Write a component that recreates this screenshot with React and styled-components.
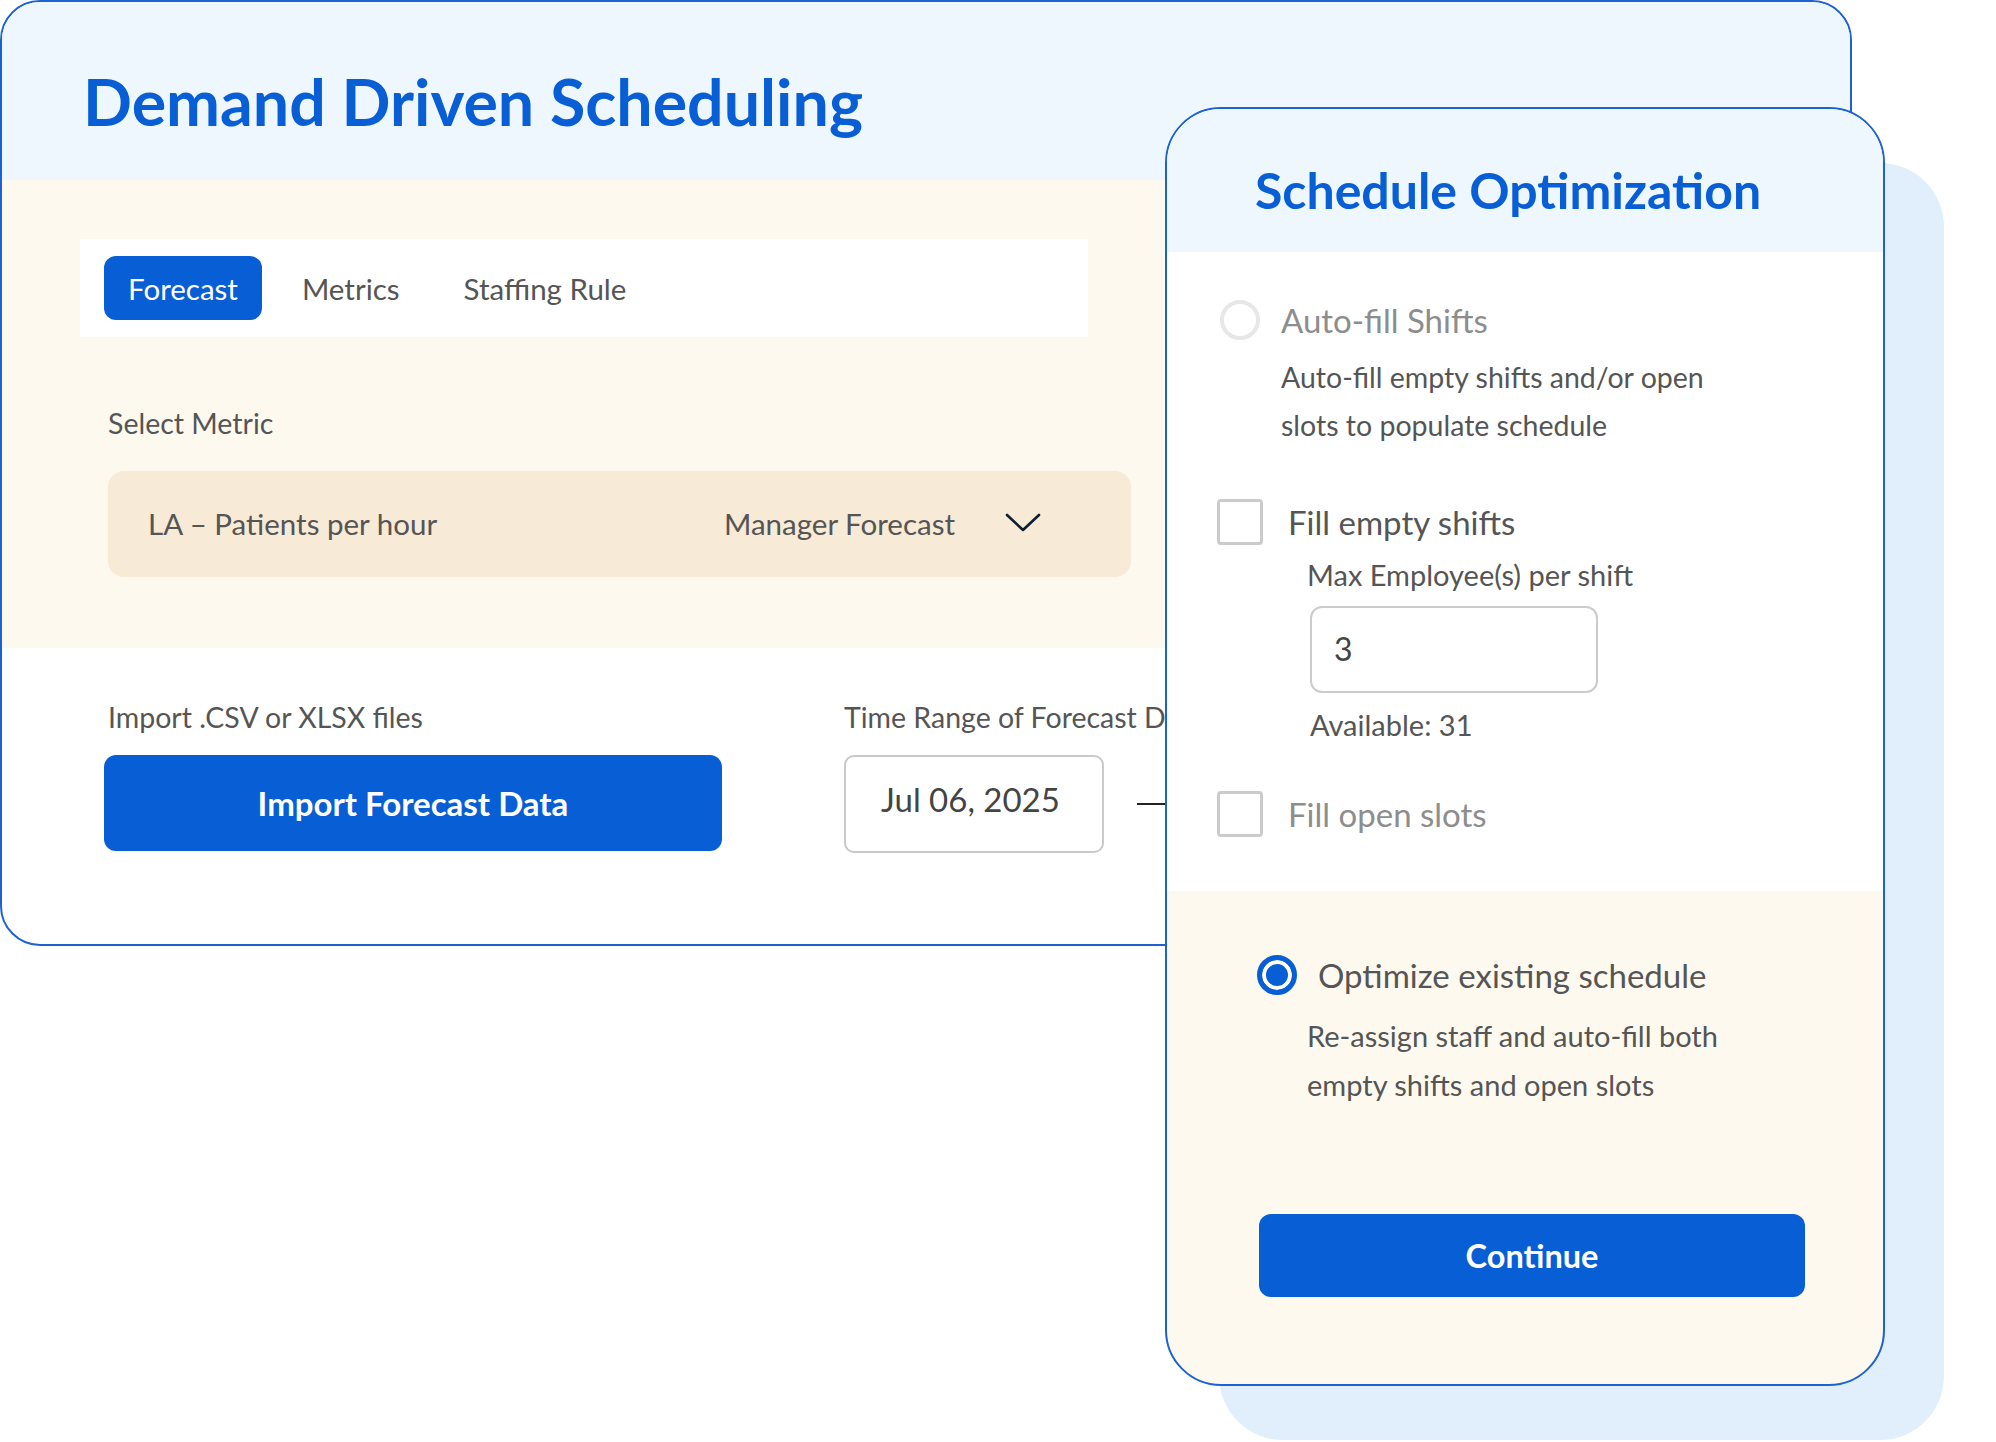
import styled, { createGlobalStyle } from "styled-components"

const GlobalStyle = createGlobalStyle`
  * { box-sizing: border-box; }
  body {
    margin: 0;
    background: #ffffff;
    font-family: Lato, "Open Sans", sans-serif;
    color: #555555;
  }
`;

const BLUE = "#085ed4";
const BORDER_BLUE = "#1c62d0";

const Stage = styled.div`
  position: relative;
  width: 1996px;
  height: 1442px;
  overflow: hidden;
`;

const Card = styled.div`
  position: relative;
  z-index: 1;
  width: 1852px;
  height: 946px;
  border: 2px solid ${BORDER_BLUE};
  border-radius: 40px;
  overflow: hidden;
  background: #ffffff;
  display: flex;
  flex-direction: column;
`;

const Header = styled.div`
  flex: none;
  height: ${p => p.height}px;
  background: #eff7fe;
  display: flex;
  align-items: center;
  padding: ${p => p.top}px 0 0 ${p => p.left}px;
`;

const Title = styled.h1`
  margin: 0;
  font-size: ${p => p.size}px;
  font-weight: 700;
  color: ${BLUE};
  white-space: nowrap;
`;

const CreamSection = styled.div`
  flex: none;
  background: #fdf9ef;
  padding: 59px 0 71px 78px;
`;

const Tabs = styled.div`
  width: 1008px;
  height: 98px;
  background: #ffffff;
  display: flex;
  align-items: center;
  gap: 16px;
  padding-left: 24px;
`;

const Tab = styled.button`
  height: 64px;
  padding: 0 24px;
  border: none;
  border-radius: 12px;
  font-family: inherit;
  font-size: 29.5px;
  background: ${p => (p.active ? BLUE : "transparent")};
  color: ${p => (p.active ? "#ffffff" : "#555555")};
`;

const Field = styled.div`
  margin-left: 28px;
`;

const Label = styled.div`
  font-size: 28.5px;
  line-height: 34px;
  margin-top: ${p => p.mt || 0}px;
  margin-left: ${p => p.ml || 0}px;
  white-space: nowrap;
`;

const Dropdown = styled.div`
  margin-top: 31px;
  width: 1023px;
  height: 106px;
  background: #f7ead6;
  border-radius: 16px;
  display: flex;
  align-items: center;
  padding: 0 90px 2px 40px;
  font-size: 29.5px;
`;

const DropValue = styled.span`
  flex: 1;
`;

const Chevron = styled.svg`
  margin-left: 50px;
`;

const ImportSection = styled.div`
  flex: 1;
  display: flex;
  gap: 122px;
  padding: 52px 0 0 102px;
`;

const Column = styled.div`
  display: flex;
  flex-direction: column;
`;

const PrimaryButton = styled.button`
  margin-top: ${p => p.mt}px;
  margin-left: ${p => p.ml || 0}px;
  width: ${p => p.w}px;
  height: ${p => p.h}px;
  border: none;
  border-radius: 12px;
  background: ${BLUE};
  color: #ffffff;
  font-family: inherit;
  font-weight: 700;
  font-size: ${p => p.size}px;
`;

const DateRow = styled.div`
  margin-top: 21px;
  display: flex;
  align-items: center;
`;

const DateInput = styled.div`
  width: 260px;
  height: 98px;
  border: 2px solid #c9c9c9;
  border-radius: 10px;
  display: flex;
  align-items: center;
  padding: 0 0 10px 35px;
  font-size: 33px;
  color: #444444;
  background: #ffffff;
`;

const Dash = styled.div`
  width: 40px;
  height: 2px;
  margin-left: 33px;
  background: #222222;
`;

const Backdrop = styled.div`
  position: absolute;
  z-index: 0;
  left: 1219px;
  top: 163px;
  width: 725px;
  height: 1277px;
  border-radius: 64px;
  background: #e1effd;
`;

const Modal = styled.div`
  position: absolute;
  z-index: 2;
  left: 1165px;
  top: 107px;
  width: 720px;
  height: 1279px;
  border: 2px solid ${BORDER_BLUE};
  border-radius: 56px;
  overflow: hidden;
  background: #fdf9ef;
  display: flex;
  flex-direction: column;
`;

const OptionsBody = styled.div`
  flex: none;
  background: #ffffff;
  padding: 48px 0 54px 50px;
`;

const CreamBody = styled.div`
  flex: 1;
  padding: 64px 0 0 90px;
`;

const OptionRow = styled.div`
  display: flex;
  align-items: center;
  gap: ${p => p.gap}px;
  margin-top: ${p => p.mt || 0}px;
  padding-left: ${p => p.indent || 0}px;
`;

const Radio = styled.span`
  flex: none;
  width: 40px;
  height: 40px;
  border-radius: 50%;
  border: ${p => (p.checked ? `5px solid ${BLUE}` : "4px solid #e7e7e7")};
  background: ${p => (p.checked ? BLUE : "#ffffff")};
  box-shadow: ${p => (p.checked ? "inset 0 0 0 4px #ffffff" : "none")};
`;

const Checkbox = styled.span`
  flex: none;
  width: 46px;
  height: 46px;
  border: 3px solid #cbcbcb;
  border-radius: 4px;
  background: #ffffff;
`;

const OptionLabel = styled.span`
  font-size: 33px;
  line-height: 40px;
  color: ${p => (p.muted ? "#8d8d8d" : "#555555")};
`;

const Desc = styled.p`
  margin: ${p => p.mt}px 0 0 ${p => p.ml}px;
  font-size: ${p => p.size}px;
  line-height: ${p => p.lh}px;
  color: #555555;
`;

const SubBlock = styled.div`
  margin-left: 90px;
`;

const SubText = styled.div`
  margin-top: ${p => p.mt}px;
  margin-left: ${p => p.ml || 0}px;
  font-size: 29px;
  line-height: 36px;
  color: #555555;
`;

const NumberBox = styled.div`
  margin: 13px 0 0 3px;
  width: 288px;
  height: 87px;
  border: 2px solid #cbcbcb;
  border-radius: 12px;
  display: flex;
  align-items: center;
  padding: 0 0 2px 22px;
  font-size: 32px;
  color: #444444;
`;

export default function App() {
  return (
    <>
      <GlobalStyle />
      <Stage>
        <Card>
          <Header height={178} top={20} left={81}>
            <Title size={64.5}>Demand Driven Scheduling</Title>
          </Header>
          <CreamSection>
            <Tabs>
              <Tab active>Forecast</Tab>
              <Tab>Metrics</Tab>
              <Tab>Staffing Rule</Tab>
            </Tabs>
            <Field>
              <Label mt={69}>Select Metric</Label>
              <Dropdown>
                <DropValue>LA – Patients per hour</DropValue>
                <span>Manager Forecast</span>
                <Chevron width="36" height="20" viewBox="0 0 36 20">
                  <polyline points="2,2 18,17 34,2" fill="none" stroke="#0f1e33" strokeWidth="2.6" strokeLinecap="round" strokeLinejoin="round" />
                </Chevron>
              </Dropdown>
            </Field>
          </CreamSection>
          <ImportSection>
            <Column>
              <Label ml={4}>Import .CSV or XLSX files</Label>
              <PrimaryButton mt={21} w={618} h={96} size={33}>Import Forecast Data</PrimaryButton>
            </Column>
            <Column>
              <Label>Time Range of Forecast Data</Label>
              <DateRow>
                <DateInput>Jul 06, 2025</DateInput>
                <Dash />
              </DateRow>
            </Column>
          </ImportSection>
        </Card>

        <Backdrop />

        <Modal>
          <Header height={143} top={19} left={88}>
            <Title size={50}>Schedule Optimization</Title>
          </Header>
          <OptionsBody>
            <OptionRow gap={21} indent={3}>
              <Radio />
              <OptionLabel muted>Auto-fill Shifts</OptionLabel>
            </OptionRow>
            <Desc mt={13} ml={64} lh={48} size={28.5}>
              Auto-fill empty shifts and/or open<br />slots to populate schedule
            </Desc>
            <OptionRow gap={25} mt={50}>
              <Checkbox />
              <OptionLabel>Fill empty shifts</OptionLabel>
            </OptionRow>
            <SubBlock>
              <SubText mt={12}>Max Employee(s) per shift</SubText>
              <NumberBox>3</NumberBox>
              <SubText mt={14} ml={3}>Available: 31</SubText>
            </SubBlock>
            <OptionRow gap={25} mt={48}>
              <Checkbox />
              <OptionLabel muted>Fill open slots</OptionLabel>
            </OptionRow>
          </OptionsBody>
          <CreamBody>
            <OptionRow gap={21}>
              <Radio checked />
              <OptionLabel>Optimize existing schedule</OptionLabel>
            </OptionRow>
            <Desc mt={16} ml={50} lh={49} size={29}>
              Re-assign staff and auto-fill both<br />empty shifts and open slots
            </Desc>
            <PrimaryButton mt={105} ml={2} w={546} h={83} size={32.5}>Continue</PrimaryButton>
          </CreamBody>
        </Modal>
      </Stage>
    </>
  )
}
